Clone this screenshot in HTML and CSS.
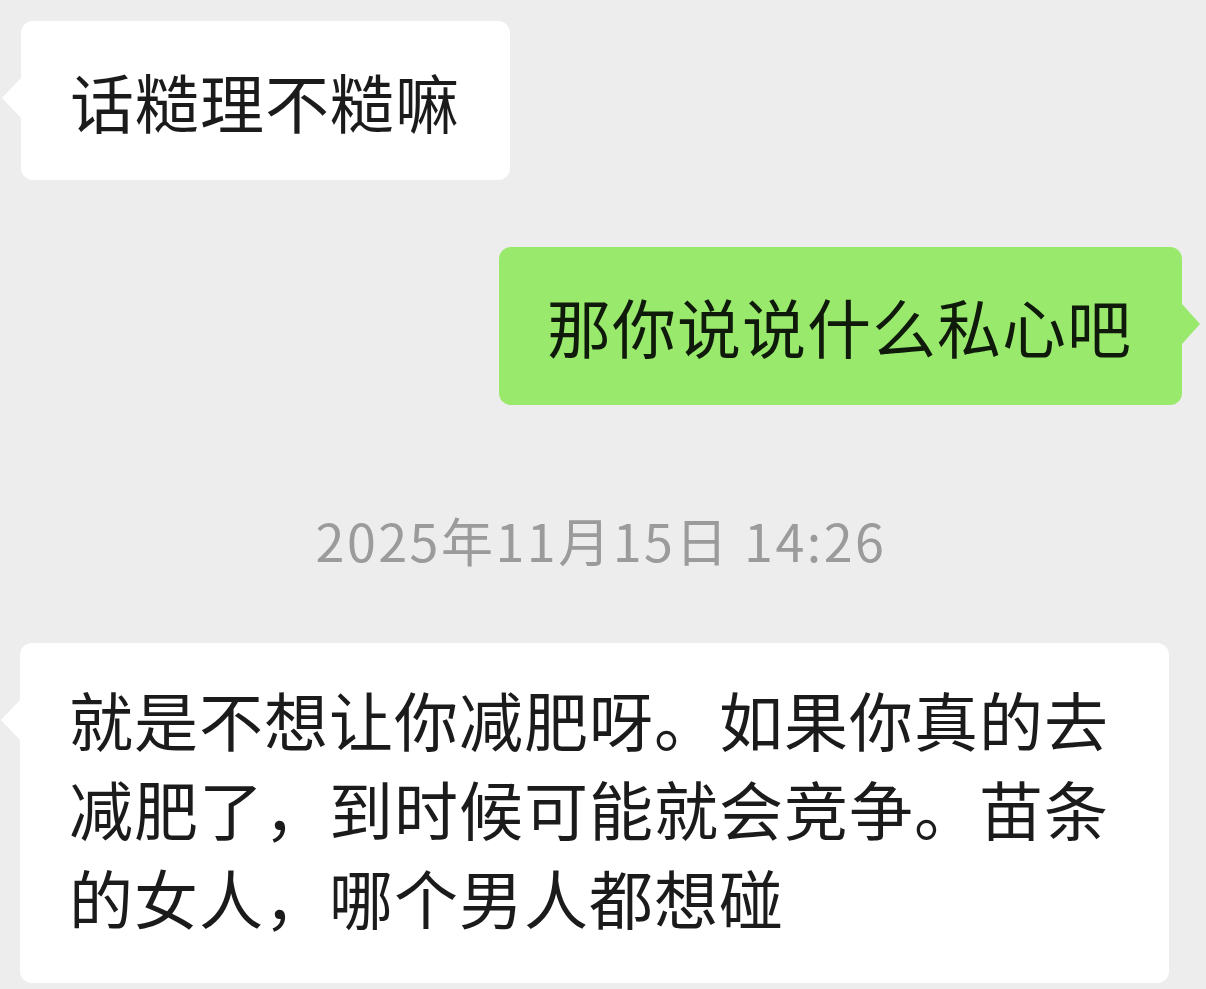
FILE: index.html
```html
<!DOCTYPE html>
<html lang="zh-CN">
<head>
  <meta charset="UTF-8" />
  <meta name="viewport" content="width=device-width, initial-scale=1.0" />
  <title>聊天记录</title>
  <link rel="stylesheet" href="styles.css">
</head>
<body>
<div class="chat">
  <div class="row left">
    <div class="bubble other first">话糙理不糙嘛</div>
  </div>

  <div class="row right">
    <div class="bubble mine">那你说说什么私心吧</div>
  </div>

  <div class="time">2025年11月15日 14:26</div>

  <div class="row left">
    <div class="bubble other long">就是不想让你减肥呀。如果你真的去减肥了，到时候可能就会竞争。苗条的女人，哪个男人都想碰</div>
  </div>
</div>
</body>
</html>
```

FILE: styles.css
```css
body {
  margin: 0;
  background: #ededed;
  font-family: "Noto Sans CJK SC", "Noto Sans", sans-serif;
}
.chat {
  padding: 21px 24px 0 20px;
  display: flex;
  flex-direction: column;
}
.row {
  display: flex;
}
.row.left {
  justify-content: flex-start;
}
.row.right {
  justify-content: flex-end;
  margin-top: 67px;
}
.bubble {
  position: relative;
  font-size: 64px;
  letter-spacing: 1px;
  line-height: 89px;
  padding: 35px 50px 35px 49px;
  border-radius: 12px;
  color: #1b1b1b;
}
.bubble::before {
  content: "";
  position: absolute;
  top: 57px;
  width: 0;
  height: 0;
  border-top: 20px solid transparent;
  border-bottom: 20px solid transparent;
}
.other {
  background: #ffffff;
}
.other::before {
  left: -19px;
  border-right: 19px solid #ffffff;
}
.first {
  margin-left: 1px;
}
.mine {
  background: #98e96c;
  color: #0f1a0a;
  padding: 34px 50px 35px 48px;
}
.mine::before {
  right: -18px;
  border-left: 18px solid #98e96c;
}
.long {
  width: 1050px;
  padding-top: 31px;
  padding-bottom: 42px;
  padding-right: 50px;
}
.time {
  margin-top: 105px;
  margin-bottom: 73px;
  text-align: center;
  font-size: 52px;
  line-height: 60px;
  letter-spacing: 2.5px;
  color: #9b9b9b;
}
```
